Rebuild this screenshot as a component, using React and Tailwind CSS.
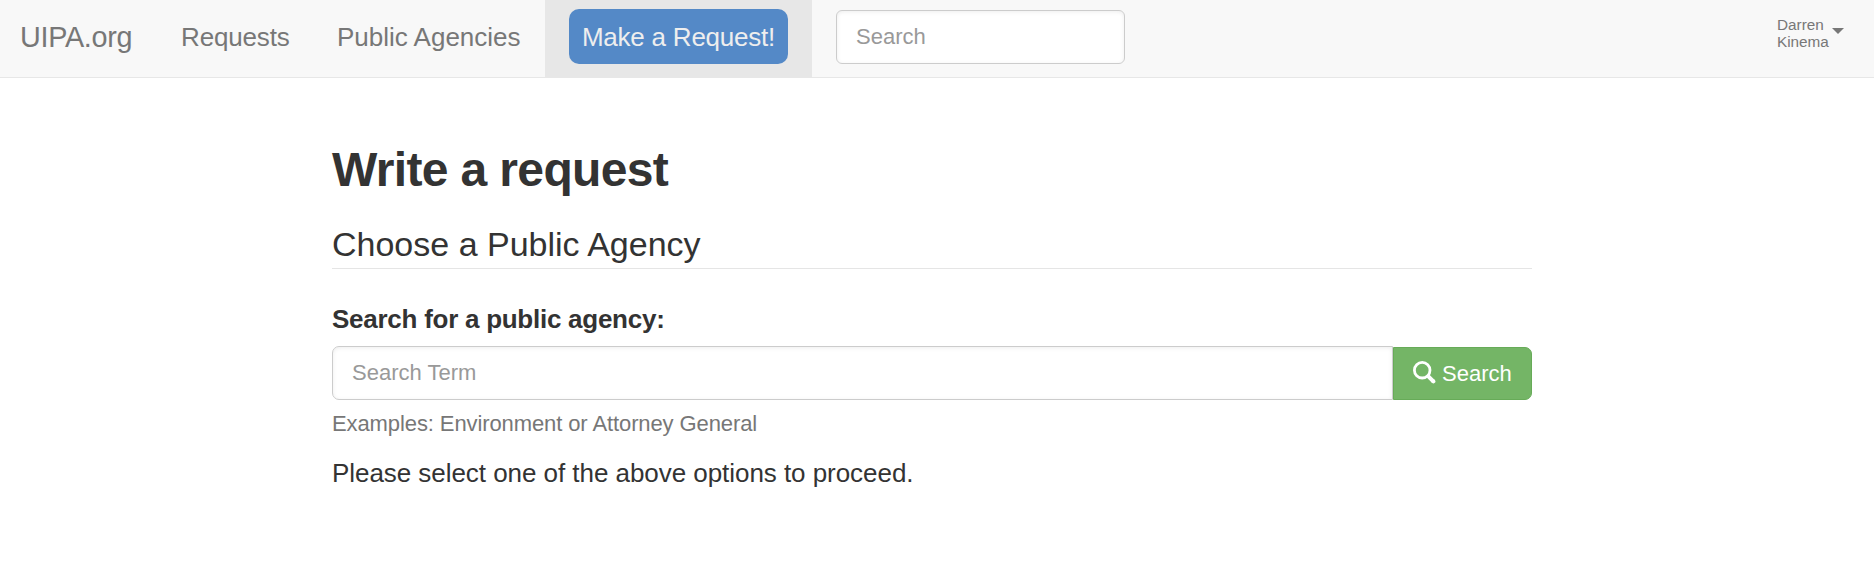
function Navbar() {
  return (
    <nav className="flex h-[78px] items-stretch border-b border-[#e7e7e7] bg-[#f8f8f8] text-[26px] leading-[36px] text-[#777]">
      <a className="w-[157px] pt-[19px] pl-5 text-[28.8px] tracking-[-0.3px] whitespace-nowrap">UIPA.org</a>
      <a className="w-[156px] pt-[19px] pl-6 tracking-[-0.15px] whitespace-nowrap">Requests</a>
      <a className="w-[232px] pt-[19px] pl-[24px] whitespace-nowrap">Public Agencies</a>
      <div className="-mb-px flex w-[267px] items-start justify-center bg-[#e7e7e7] pt-[9px]">
        <a className="flex h-[55px] w-[219px] justify-center rounded-[10px] bg-[#5489c7] pt-[10px] tracking-[-0.22px] whitespace-nowrap text-[#eee]">
          Make a Request!
        </a>
      </div>
      <input
        className="mt-[10px] ml-6 h-[54px] w-[289px] rounded-md border border-[#ccc] bg-white px-[19px] pb-px text-[22px] shadow-[inset_0_1px_4px_rgba(0,0,0,0.075)] outline-none placeholder:text-[#999]"
        placeholder="Search"
      />
      <a className="mt-4 mr-[30px] ml-auto flex text-[15.3px] leading-[17px]">
        <span className="w-[55px]">
          Darren
          <br />
          Kinema
        </span>
        <svg className="mt-3 h-[6px] w-3" viewBox="0 0 12 6" fill="currentColor">
          <path d="M0 0h12L6 6z" />
        </svg>
      </a>
    </nav>
  );
}

function SearchIcon() {
  return (
    <svg className="mt-[13px] h-[23px] w-[23px]" viewBox="0 0 23 23" fill="none" stroke="currentColor">
      <circle cx="9.2" cy="9.2" r="7.8" strokeWidth="2.8" />
      <path d="M14.6 14.6l5.5 5.5" strokeWidth="4" />
      <path d="M20 20l.4 .4" strokeWidth="4" strokeLinecap="round" />
    </svg>
  );
}

export default function App() {
  return (
    <div className="min-h-screen bg-white font-['Liberation_Sans',Arial,sans-serif] text-[#333]">
      <Navbar />
      <main className="mx-auto w-[1200px] -translate-x-[5px]">
        <h1 className="pt-[65px] text-[48px] leading-[54px] font-bold tracking-[-0.65px]">Write a request</h1>
        <h2 className="mt-[28px] border-b border-[#e5e5e5] pb-[5px] text-[34px] leading-[38px]">
          Choose a Public Agency
        </h2>
        <label className="mt-8 block text-[26px] leading-[36px] font-bold tracking-[-0.26px]">
          Search for a public agency:
        </label>
        <div className="mt-[9px] flex">
          <input
            className="h-[54px] w-[1061px] rounded-l-[7px] border border-[#ccc] bg-white px-[19px] text-[22px] shadow-[inset_0_1px_4px_rgba(0,0,0,0.075)] outline-none placeholder:text-[#999]"
            placeholder="Search Term"
          />
          <button className="mt-px flex h-[53px] w-[139px] rounded-r-[7px] border border-[#67ab58] bg-[#74b566] pl-[19px] text-[22px] leading-[51px] text-white">
            <SearchIcon />
            <span className="ml-[6px]">Search</span>
          </button>
        </div>
        <p className="mt-2 text-[22px] leading-[32px] tracking-[-0.1px] text-[#777]">
          Examples: Environment or Attorney General
        </p>
        <p className="mt-[15px] text-[26px] leading-[36px] tracking-[-0.05px]">
          Please select one of the above options to proceed.
        </p>
      </main>
    </div>
  );
}
